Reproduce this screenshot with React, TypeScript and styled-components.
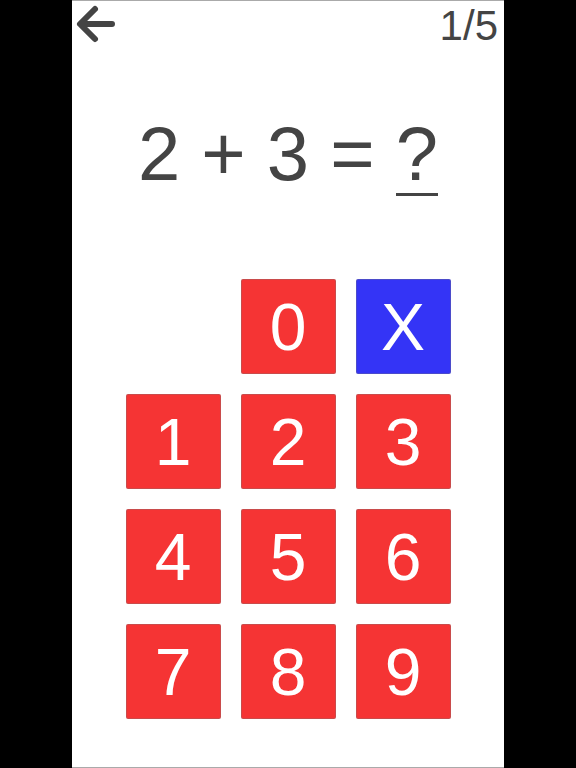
import React from "react";
import styled, { createGlobalStyle } from "styled-components";

const GlobalStyle = createGlobalStyle`
  html, body {
    margin: 0;
    padding: 0;
    background: #000000;
  }
  body {
    font-family: "Liberation Sans", Arial, sans-serif;
  }
`;

const Screen = styled("div")`
  width: 432px;
  height: 768px;
  margin: 0 auto;
  background: #ffffff;
  box-sizing: border-box;
  border-top: 1px solid #aaaaaa;
  border-bottom: 1px solid #aaaaaa;
  display: flex;
  flex-direction: column;
  align-items: center;
`;

const TopBar = styled("div")`
  width: 100%;
  height: 50px;
  display: flex;
  justify-content: space-between;
  align-items: center;
  padding: 0 6px 0 2px;
  box-sizing: border-box;
`;

const BackButton = styled("button")`
  border: none;
  background: none;
  padding: 0;
  width: 42px;
  height: 42px;
  margin-top: -4px;
  cursor: pointer;
  display: flex;
  align-items: center;
  justify-content: center;
`;

const Progress = styled("span")`
  color: #444444;
  font-size: 42px;
  line-height: 1;
  font-family: "Liberation Sans", Arial, sans-serif;
`;

const Equation = styled("div")`
  margin-top: 65px;
  height: 110px;
  color: #444444;
  font-size: 76px;
  line-height: 1;
  font-family: "Liberation Sans", Arial, sans-serif;
  white-space: pre;
`;

const Answer = styled("span")`
  display: inline-block;
  line-height: 1;
  padding-bottom: 1px;
  border-bottom: 3px solid #444444;
`;

const Pad = styled("div")`
  margin-top: 53px;
  display: grid;
  grid-template-columns: repeat(3, 95px);
  grid-auto-rows: 95px;
  gap: 20px;
`;

const Key = styled("button")<{ tone: "red" | "blue" }>`
  width: 95px;
  height: 95px;
  border: 1px solid rgba(120, 120, 120, 0.35);
  border-radius: 2px;
  background: ${(p) => (p.tone === "blue" ? "#3434f6" : "#f53434")};
  color: #ffffff;
  font-family: "Liberation Sans", Arial, sans-serif;
  font-size: 66px;
  line-height: 1;
  padding: 0;
  display: flex;
  align-items: center;
  justify-content: center;
  cursor: pointer;
`;

const Blank = styled("div")``;

const BackArrow = () => (
  <svg width="42" height="42" viewBox="0 0 42 42">
    <path
      d="M38 21H8M21 6L6 21l15 15"
      fill="none"
      stroke="#444444"
      strokeWidth="6"
      strokeLinecap="round"
      strokeLinejoin="round"
    />
  </svg>
);

const digits = ["1", "2", "3", "4", "5", "6", "7", "8", "9"];

export default function App() {
  return (
    <>
      <GlobalStyle />
      <Screen>
        <TopBar>
          <BackButton aria-label="back">
            <BackArrow />
          </BackButton>
          <Progress>1/5</Progress>
        </TopBar>
        <Equation>
          {"2 + 3 = "}
          <Answer>?</Answer>
        </Equation>
        <Pad>
          <Blank />
          <Key tone="red">0</Key>
          <Key tone="blue">X</Key>
          {digits.map((d) => (
            <Key key={d} tone="red">
              {d}
            </Key>
          ))}
        </Pad>
      </Screen>
    </>
  );
}
